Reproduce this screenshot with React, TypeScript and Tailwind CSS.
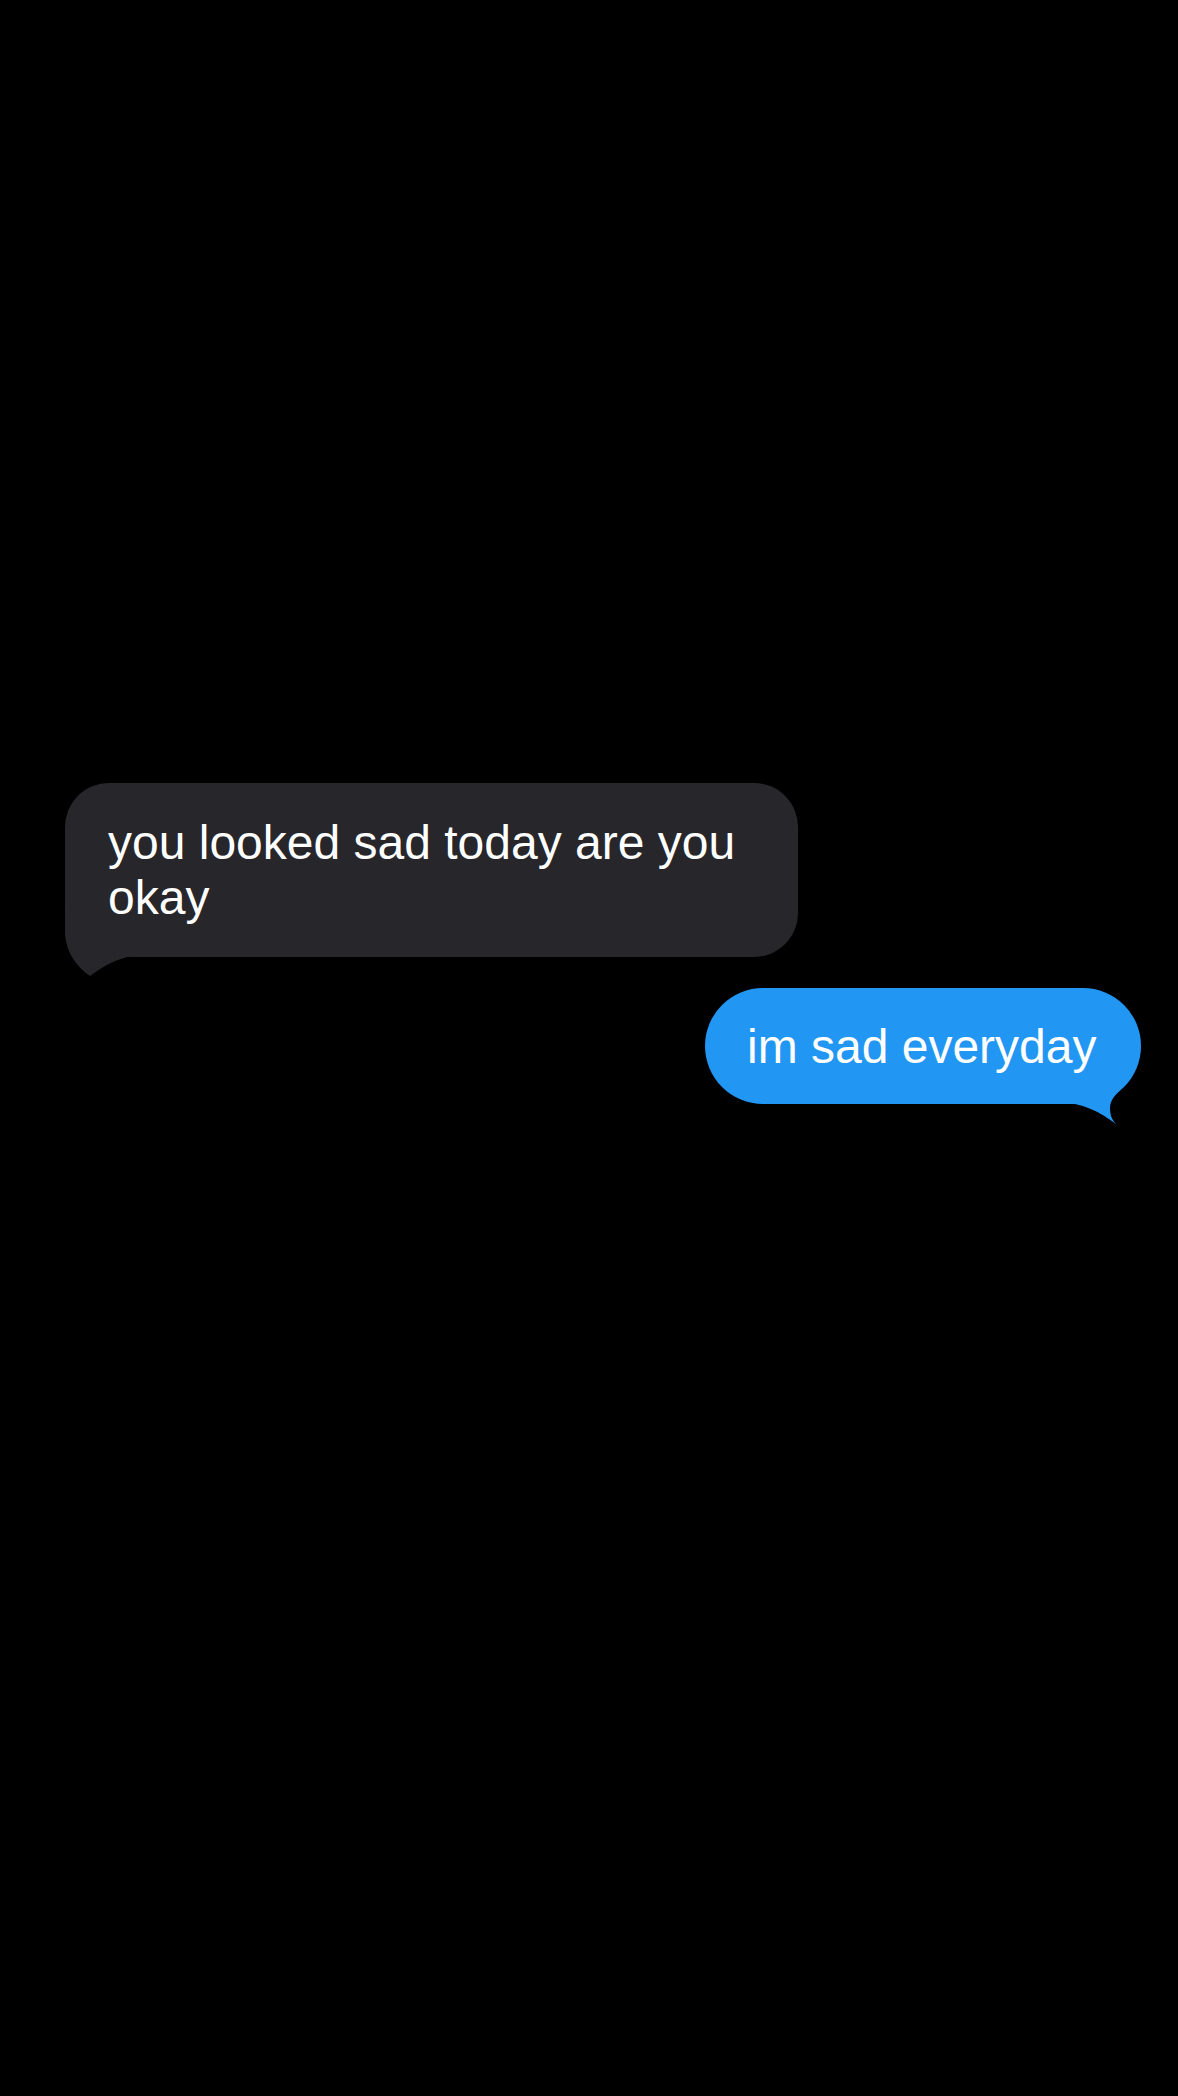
export default function App() {
  return (
    <div
      className="w-[1178px] h-[2096px] bg-black flex flex-col pt-[783px]"
      style={{ fontFamily: '"Liberation Sans", Arial, sans-serif' }}
    >
      {/* incoming */}
      <div className="pl-[65px]">
        <div className="relative w-[733px] bg-[#27262b] rounded-[44px] pt-[32px] pb-[32px] px-[43px]">
          <svg
            width={733}
            height={174}
            className="absolute left-0 top-0 overflow-visible pointer-events-none"
          >
            <path
              d="M0 128 L0 152 C2 171 12 184 25 193 C36 185 48 177 66 173 L44 130 Z"
              fill="#27262b"
            />
          </svg>
          <p className="relative text-white text-[48px] leading-[55px]">
            you looked sad today are you okay
          </p>
        </div>
      </div>

      {/* outgoing */}
      <div className="flex justify-end pr-[37px] mt-[31px]">
        <div className="relative w-[436px] bg-[#2196f3] rounded-full pt-[31px] pb-[30px] px-[42px]">
          <svg
            width={436}
            height={116}
            className="absolute left-0 top-0 overflow-visible pointer-events-none"
          >
            <path
              d="M360 96 L421 96 C414 104 405 110 405 120 C405 127 407 132 411 136 C402 130 392 121 370 116 Z"
              fill="#2196f3"
            />
          </svg>
          <p className="relative text-white text-[48px] leading-[55px] whitespace-nowrap">
            im sad everyday
          </p>
        </div>
      </div>
    </div>
  );
}
